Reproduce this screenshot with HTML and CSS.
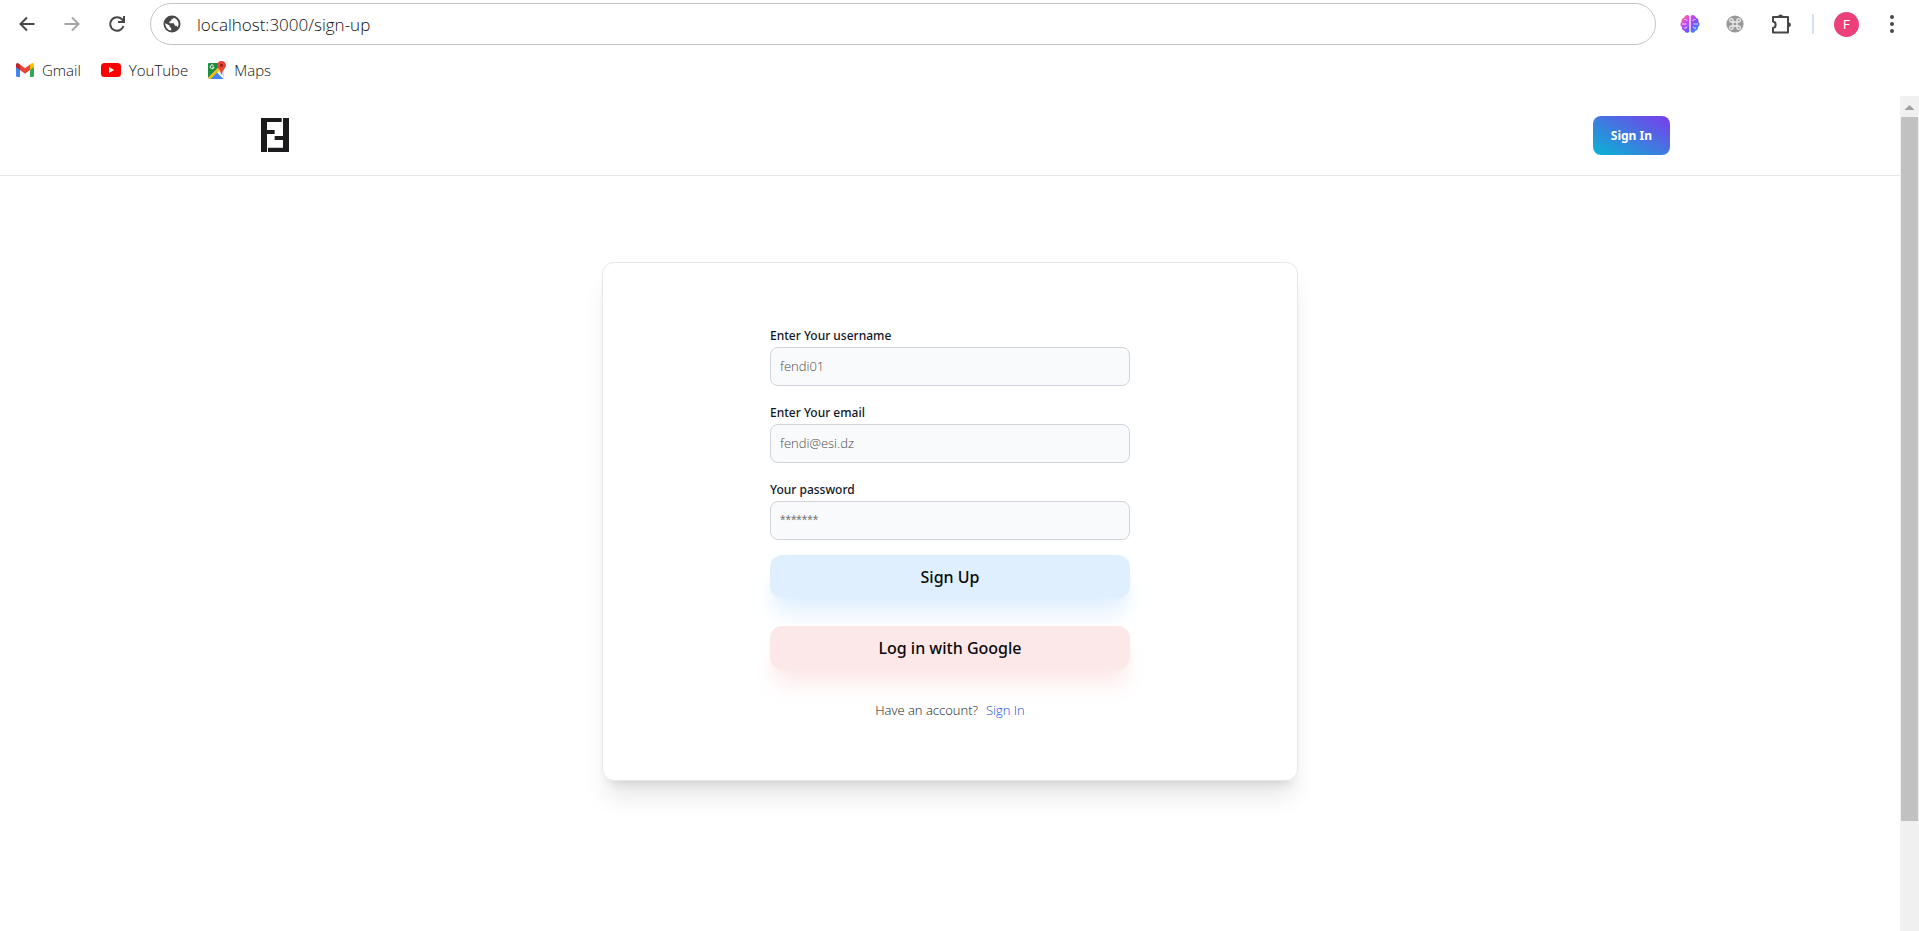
FILE: index.html
```html
<!DOCTYPE html>
<html lang="en">
<head>
<meta charset="utf-8">
<title>Sign up</title>
<link rel="stylesheet" href="styles.css">
</head>
<body>
<div class="browser">
  <nav class="toolbar" aria-label="Browser">
    <button class="tool" aria-label="Back"><svg width="20" height="20" viewBox="0 0 20 20" fill="none" stroke="#474747" stroke-width="2"><path d="M17.500 10H4M10 3.500L3.500 10l6.500 6.500"/></svg></button>
    <button class="tool" aria-label="Forward"><svg width="20" height="20" viewBox="0 0 20 20" fill="none" stroke="#a6a6a6" stroke-width="2"><path d="M2.500 10H16M10 3.500l6.500 6.500-6.500 6.500"/></svg></button>
    <button class="tool" aria-label="Reload"><svg width="20" height="20" viewBox="0 0 20 20" fill="none" stroke="#474747" stroke-width="2"><path d="M16.500 12A6.800 6.800 0 1 1 15 5.300L17 7.500"/><path d="M17 2v6h-6"/></svg></button>
    <div class="omnibox">
      <svg width="18" height="18" viewBox="0 0 18 18"><circle cx="9" cy="9" r="8.500" fill="#474747"/><path fill="#fff" d="M2.300 8.300l4.200 2.200.2 1.500 1.500 1v2.600A6.800 6.800 0 0 1 2.300 8.300zM10.500 2.400c.3 1.400-.8 1.700-2 1.900l-.3 1.800-1.800.5v1.600h4.400l1.200 2.600h1.600l1 1.500a6.800 6.800 0 0 0-4.100-9.900z"/></svg>
      <input class="address" type="text" aria-label="Address" value="localhost:3000/sign-up">
    </div>
    <div class="extensions">
      <button class="tool" aria-label="Brain extension"><svg width="20" height="20" viewBox="0 0 20 20"><defs><linearGradient id="brain" x1="0" y1="0" x2="1" y2="1"><stop offset="0" stop-color="#ff9a3c"/><stop offset=".3" stop-color="#d946ef"/><stop offset=".65" stop-color="#6a55f5"/><stop offset="1" stop-color="#36b4f7"/></linearGradient></defs><path fill="url(#brain)" d="M9.300 2v16c-1.800 1.400-4.200.7-4.800-1.300C2.500 16.500 1.400 14.500 2 13 0 12 0 9 1.600 8 1 5.500 2.500 4 4 3.700 4.800 1 7.800.3 9.300 2zM10.700 2v16c1.800 1.400 4.200.7 4.800-1.300 2-.2 3.100-2.200 2.500-3.700 2-1 2-4 .4-5 .6-2.500-.9-4-2.400-4.300C15.200 1 12.200.3 10.700 2z"/><path fill="none" stroke="#fff" stroke-width=".8" d="M4.500 5.500C6 5 7 6 7 7M2 10h4.500M4 14c1.500.6 3-.2 3-1.500M15.500 5.500C14 5 13 6 13 7M18 10h-4.500M16 14c-1.500.6-3-.2-3-1.500"/></svg></button>
      <button class="tool" aria-label="Shortcut extension"><svg width="18" height="18" viewBox="0 0 18 18"><circle cx="9" cy="9" r="8.600" fill="#999"/><path fill="none" stroke="#eee" stroke-width="1.300" d="M7 7h4v4H7zM7 7H5.500A1.700 1.700 0 1 1 7 5.500zM11 7V5.500A1.700 1.700 0 1 1 12.500 7zM7 11v1.500A1.700 1.700 0 1 1 5.500 11zM11 11h1.500a1.700 1.700 0 1 1-1.500 1.500z"/></svg></button>
      <button class="tool" aria-label="Extensions"><svg width="22" height="22" viewBox="0 0 22 22"><path fill="none" stroke="#474747" stroke-width="2" stroke-linejoin="round" d="M3 4h15v15.500H3V15c3.500-.5 3.500-6 0-6.500z"/><path fill="#474747" d="M8 4a2.500 2.500 0 0 1 5 0zM18.500 9.200a2.500 2.500 0 0 1 0 5z"/></svg></button>
      <span class="divider"></span>
      <button class="avatar" aria-label="Profile">F</button>
      <button class="tool menu" aria-label="Menu"><svg width="4" height="18" viewBox="0 0 4 18" fill="#474747"><circle cx="2" cy="2" r="2"/><circle cx="2" cy="9" r="2"/><circle cx="2" cy="16" r="2"/></svg></button>
    </div>
  </nav>
  <nav class="bookmarks" aria-label="Bookmarks">
    <a href="#"><svg width="18" height="14" viewBox="0 0 18 14"><path fill="#4285f4" d="M0 2v10.800c0 .7.500 1.200 1.200 1.200H4V6z"/><path fill="#34a853" d="M14 6v8h2.800c.7 0 1.200-.5 1.200-1.200V2z"/><path fill="#fbbc04" d="M14 1.500V7l4-3V2c0-1.900-1.700-2.500-3-1.300z"/><path fill="#ea4335" d="M4 7V1.500L9 5.300l5-3.800V7l-5 3.800z"/><path fill="#c5221f" d="M0 2v2l4 3V1.500L3 .7C1.700-.5 0 .1 0 2z"/></svg>Gmail</a>
    <a href="#"><svg width="20" height="14" viewBox="0 0 20 14"><rect width="20" height="14" rx="3.500" fill="#f00"/><path fill="#fff" d="M8 4l5.200 3L8 10z"/></svg>YouTube</a>
    <a href="#"><svg width="18" height="18" viewBox="0 0 18 18"><path fill="#34a853" d="M1.500 2H13L1 16V2.500z"/><path fill="#1e8e3e" d="M0 3q0-1 1-1h9v5L0 17z"/><path fill="#fbbc04" d="M0 17L10 7l2 2-9 9H1z"/><path fill="#dadce0" d="M10 10l6 6V6z"/><path fill="#4285f4" d="M2.500 18l6.500-6.500L15.500 18z"/><path fill="none" stroke="#fff" d="M5.500 4.500a1.900 1.900 0 1 0 .5 1.700H4.300"/><path fill="#ea4335" d="M13.500 0A4.300 4.300 0 0 1 18 4.300c0 3-3.700 4.200-4.200 9.200h-.6C12.700 8.500 9 7.300 9 4.300A4.300 4.300 0 0 1 13.500 0z"/><circle cx="13.500" cy="4.300" r="1.500" fill="#901b12"/></svg>Maps</a>
  </nav>
</div>
<div class="viewport">
  <div class="page">
    <header class="header">
      <div class="header-inner">
        <a class="logo" href="#" aria-label="Home"><svg width="28" height="34" viewBox="0 0 84 102" fill="#1c1c1e"><path d="M0 0h62v12H18v24h23v12H18v54H0z"/><path d="M66 0h18v102H21V89h45V66H41V54h25z"/></svg></a>
        <button class="header-button">Sign In</button>
      </div>
    </header>
    <main class="content">
      <form class="card">
        <div class="field"><label for="username">Enter Your username</label><input id="username" type="text" placeholder="fendi01"></div>
        <div class="field"><label for="email">Enter Your email</label><input id="email" type="email" placeholder="fendi@esi.dz"></div>
        <div class="field"><label for="password">Your password</label><input id="password" type="password" placeholder="*******"></div>
        <button class="action action-blue" type="submit">Sign Up</button>
        <button class="action action-red" type="button">Log in with Google</button>
        <p class="account"><span>Have an account?</span><a href="#">Sign In</a></p>
      </form>
    </main>
  </div>
  <div class="scrollbar" aria-hidden="true"><span class="scroll-arrow"></span><span class="scroll-thumb"></span></div>
</div>
</body>
</html>
```
FILE: styles.css
```css
* { box-sizing: border-box; }
body {
  margin: 0;
  height: 100vh;
  display: flex;
  flex-direction: column;
  overflow: hidden;
  background: #fff;
  font-family: "Noto Sans", "Open Sans", sans-serif;
  font-size: 12px;
}
button, input { font: inherit; }
button { border: 0; padding: 0; cursor: pointer; }
a { text-decoration: none; }
svg { display: block; flex: none; }

.browser { flex: none; height: 96px; padding-top: 3px; }
.toolbar { display: flex; align-items: center; padding: 0 25px 0 17px; }
.tool { background: none; margin-right: 25px; }
.omnibox {
  flex: 1;
  display: flex;
  align-items: center;
  gap: 16px;
  height: 42px;
  margin-left: -2px;
  padding: 0 12px;
  border: 1px solid #c4c4c4;
  border-radius: 21px;
}
.address {
  flex: 1;
  border: 0;
  padding: 0;
  outline: 0;
  background: none;
  color: #111;
  font-family: "Open Sans", sans-serif;
  font-weight: 300;
  font-size: 17px;
}
.extensions { display: flex; align-items: center; padding-left: 24px; }
.extensions .tool + .tool { margin-left: 1px; }
.divider { width: 2px; height: 20px; margin: 0 20px 0 -5px; background: #d3e0f3; }
.avatar {
  width: 25px;
  height: 25px;
  margin-right: 31px;
  border-radius: 50%;
  background: #ec407a;
  color: #fff;
  font-family: Roboto, sans-serif;
  font-size: 13px;
}
.extensions .menu { margin-right: 0; }
.bookmarks { display: flex; gap: 20px; padding: 13px 16px; }
.bookmarks a {
  display: flex;
  align-items: center;
  gap: 8px;
  height: 24px;
  color: #111;
  font-family: "Open Sans", sans-serif;
  font-weight: 300;
  font-size: 15px;
}

.viewport { flex: 1; display: flex; min-height: 0; }
.page { flex: 1; overflow: hidden; }
.header { border-bottom: 1px solid #e5e7eb; }
.header-inner {
  display: flex;
  justify-content: space-between;
  align-items: center;
  max-width: 1440px;
  height: 79px;
  margin: 0 auto;
}
.logo { padding: 0 0 1px 31px; }
.header-button {
  height: 39px;
  padding: 0 18px;
  border-radius: 8px;
  background: linear-gradient(to top right, #06b6d4, #7c3aed);
  color: #fff;
  font-weight: 700;
}
.content { display: flex; justify-content: center; padding: 86px 16px; }
.card {
  display: flex;
  flex-direction: column;
  align-items: center;
  width: 100%;
  max-width: 696px;
  padding: 62px 16px 60px;
  border: 1px solid #e5e7eb;
  border-radius: 12px;
  box-shadow: 0 20px 25px -5px rgba(0,0,0,.1), 0 8px 10px -6px rgba(0,0,0,.1);
}
.field { width: 100%; max-width: 360px; margin-bottom: 16px; }
.field:last-of-type { margin-bottom: 15px; }
.field label {
  display: block;
  height: 22px;
  line-height: 22px;
  color: #111827;
  font-weight: 500;
}
.field input {
  width: 100%;
  height: 39px;
  padding: 0 9px 2px;
  border: 1px solid #d1d5db;
  border-radius: 8px;
  background: #f9fafb;
  font-family: "Open Sans", sans-serif;
  font-weight: 300;
  font-size: 13px;
}
.field input::placeholder { color: #4b4b4b; }
.field input[type="password"]::placeholder { color: #757575; font-family: "Liberation Sans", sans-serif; font-size: 14px; }
.action {
  width: 100%;
  max-width: 360px;
  height: 43px;
  margin-bottom: 28px;
  border-radius: 12px;
  color: #09090b;
  font-weight: 500;
  font-size: 16px;
}
.action-blue { background: #e0effe; box-shadow: 0 20px 25px -5px #e0effe, 0 8px 10px -6px #e0effe; }
.action-red { background: #fce8e8; box-shadow: 0 20px 25px -5px #fce8e8, 0 8px 10px -6px #fce8e8; }
.account {
  display: flex;
  gap: 8px;
  margin: 3px 0 0;
  line-height: 20px;
  color: #111827;
  font-family: "Open Sans", sans-serif;
  font-weight: 300;
  font-size: 13px;
}
.account a { color: #1d4ed8; }

.scrollbar { flex: none; width: 19px; padding: 7px 1px 0; background: #f0f0f0; }
.scroll-arrow {
  display: block;
  width: 10px;
  height: 5px;
  margin: 2px auto 7px;
  background: #a0a0a0;
  clip-path: polygon(50% 0, 100% 100%, 0 100%);
}
.scroll-thumb { display: block; height: 85%; background: #c1c1c1; }
```
